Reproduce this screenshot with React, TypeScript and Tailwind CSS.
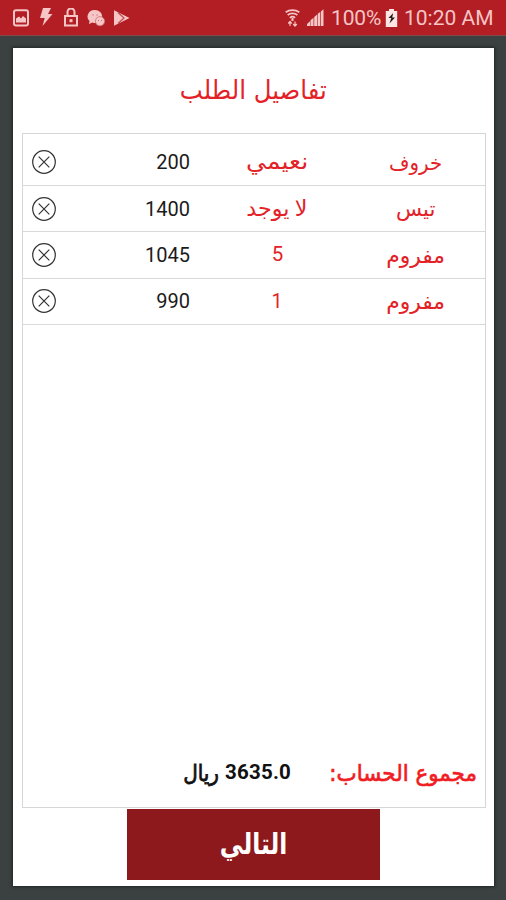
import React from "react";

const rows = [
  { name: "خروف", kind: "نعيمي", amount: "200", nameScale: "scale-x-[1.04] scale-y-[1.1]", kindScale: "scale-x-[1.29] scale-y-[1.15]" },
  { name: "تيس", kind: "لا يوجد", amount: "1400", nameScale: "scale-x-[1.12] scale-y-[1.1]", kindScale: "scale-x-[1.14] scale-y-[1.12]" },
  { name: "مفروم", kind: "5", amount: "1045", nameScale: "scale-x-[1.15] scale-y-[1.15]", kindScale: "scale-x-[1.05]" },
  { name: "مفروم", kind: "1", amount: "990", nameScale: "scale-x-[1.15] scale-y-[1.15]", kindScale: "scale-x-100" },
];

function StatusBar() {
  return (
    <header className="flex h-[36px] shrink-0 items-center justify-between border-b border-[#84494b] bg-[#b21e23] pr-[12px] pl-[13px] text-[#f6c5c5]">
      <div className="flex items-center">
        <svg width="16" height="18" viewBox="0 0 16 18" fill="none">
          <rect x="1" y="1.2" width="14" height="15.2" rx="2" stroke="currentColor" strokeWidth="2" />
          <path d="M3 13.5V9.5L6 7.5l2 2 2-2.5 3 2.5v4z" fill="currentColor" />
        </svg>
        <svg className="ml-[10px]" width="14" height="19" viewBox="0 0 14 19" fill="currentColor">
          <path d="M4 0h8L9 6h4.5L3.5 18l2.2-8H1z" />
        </svg>
        <svg className="ml-[11px]" width="14" height="19" viewBox="0 0 14 19" fill="none" stroke="currentColor">
          <path d="M3.5 8V4a3.5 3.5 0 0 1 7 0v4" strokeWidth="2" />
          <rect x="1" y="8" width="12" height="9.5" strokeWidth="2" />
          <rect x="6" y="11.7" width="2" height="2" fill="currentColor" />
        </svg>
        <svg className="ml-[9px]" width="18" height="18" viewBox="0 0 18 18">
          <path d="M7.5 1a7 6.5 0 0 0-5 11L2 15l3.5-1.5A7 6.5 0 1 0 7.5 1z" fill="currentColor" />
          <circle cx="6" cy="6" r=".8" fill="#d98588" />
          <circle cx="10" cy="6" r=".8" fill="#d98588" />
          <circle cx="13" cy="12.2" r="4.6" fill="currentColor" stroke="#cc7073" strokeWidth=".8" />
          <path d="M11.5 11v1M14.5 11v1" stroke="#cc7073" />
        </svg>
        <svg className="ml-[8px]" width="17" height="18" viewBox="0 0 17 18">
          <path d="M1 1.2 16.5 9 1 16.8z" fill="currentColor" />
          <path d="m5 3.5 6 5.5-6 5.5" stroke="#b94b4e" strokeWidth="1.2" fill="none" />
        </svg>
      </div>
      <div className="flex items-center font-[Roboto,sans-serif] text-[21px] leading-[24px]">
        <svg width="15" height="18" viewBox="0 0 15 18" fill="none" stroke="currentColor">
          <path d="M.7 3.2a10 8 0 0 1 13.6 0M2.7 6a7 6 0 0 1 9.6 0M4.9 8.8a4 4 0 0 1 5.2 0" strokeWidth="1.7" />
          <path d="M7.5 9v3" strokeWidth="2" />
          <path d="M5 17v-4M3.2 14.5 5 12.5l1.8 2M10 12.5v4M8.2 15l1.8 2 1.8-2" strokeWidth="1.2" />
        </svg>
        <svg className="ml-[6px]" width="18" height="18" viewBox="0 0 18 18" fill="currentColor">
          <path d="M1 17v-2l3-2.8V17zM4.5 17v-5.8l3-2.4V17zM8.2 17V8l3-2.4V17zM11.8 17V4.8l2.4-1.9V17zM14.9 17V2.4L17.5.3V17z" />
        </svg>
        <span className="ml-[7px] w-[51px] whitespace-nowrap tracking-[-0.15px]">100%</span>
        <svg className="ml-[3px]" width="13" height="18" viewBox="0 0 13 18">
          <path d="M4 0h5v2h3.2v16H.8V2H4z" fill="#fde5e4" />
          <path d="M8.2 4 3.5 9h2.8l-1.8 5.5L10 8.5H7.2z" fill="#24191a" />
        </svg>
        <span className="ml-[6px] w-[90px] whitespace-nowrap">10:20 AM</span>
      </div>
    </header>
  );
}

function RemoveButton() {
  return (
    <button aria-label="حذف" className="ml-[8px] h-[26px] w-[26px] shrink-0">
      <svg width="26" height="26" viewBox="0 0 26 26" fill="none" stroke="#333" strokeWidth="1.2">
        <circle cx="13" cy="13" r="11.3" />
        <path d="m7.7 7.7 10.6 10.6M18.3 7.7 7.7 18.3" />
      </svg>
    </button>
  );
}

export default function App() {
  return (
    <div className="flex h-[900px] w-[506px] flex-col overflow-hidden bg-[#3b4040] font-['DejaVu_Sans',sans-serif]">
      <StatusBar />
      <main className="mx-[13px] mt-[12px] flex h-[838px] w-[481px] flex-col bg-white px-[9px] shadow-[0_0_3px_1px_#202626]">
        <h1 dir="rtl" className="flex h-[84px] shrink-0 items-center justify-center text-[23px] text-[#e32228]">
          <span className="inline-block scale-x-[1.06] scale-y-[1.13] whitespace-nowrap">تفاصيل الطلب</span>
        </h1>
        <section className="mt-px flex h-[675px] w-[464px] shrink-0 flex-col border border-[#d6d6d6]">
          {rows.map((row, i) => (
            <div
              key={i}
              className={
                i === 0
                  ? "flex h-[52px] shrink-0 items-center border-b border-[#d9d9d9] pt-[5px]"
                  : "flex h-[46.3px] shrink-0 items-center border-b border-[#d9d9d9]"
              }
            >
              <RemoveButton />
              <span className="w-[133px] text-right font-[Roboto,sans-serif] text-[20px] text-[#1b1b1b]">{row.amount}</span>
              <span dir="rtl" className="ml-[31px] flex w-[112px] justify-center font-[Roboto,'DejaVu_Sans',sans-serif] text-[19.5px] whitespace-nowrap text-[#e32228]">
                <span className={`inline-block ${row.kindScale}`}>{row.kind}</span>
              </span>
              <span dir="rtl" className="ml-[27px] flex w-[112px] justify-center text-[19px] whitespace-nowrap text-[#e32228]">
                <span className={`inline-block ${row.nameScale}`}>{row.name}</span>
              </span>
            </div>
          ))}
          <div dir="rtl" className="mt-auto flex h-[69px] items-center pr-[8px] text-[20px]">
            <span className="w-[146px] whitespace-nowrap text-[#f01d24]">
              <span className="inline-block origin-right scale-x-[1.07] scale-y-[1.12] [-webkit-text-stroke:0.6px_#f01d24]">مجموع الحساب:</span>
            </span>
            <span className="mr-[40px] flex items-center gap-[6px] whitespace-nowrap text-[#111]">
              <span className="font-[Roboto,sans-serif] text-[20.5px] font-bold tracking-[0.2px]">3635.0</span>
              <span className="inline-block origin-right scale-y-[1.1] [-webkit-text-stroke:0.7px_#111]">ريال</span>
            </span>
          </div>
        </section>
        <button className="mt-px ml-[105px] flex h-[71px] w-[253px] shrink-0 items-center justify-center bg-[#8d191d] text-[26px] font-bold text-white">
          <span className="inline-block scale-x-[0.9] scale-y-[1.13]">التالي</span>
        </button>
      </main>
    </div>
  );
}
